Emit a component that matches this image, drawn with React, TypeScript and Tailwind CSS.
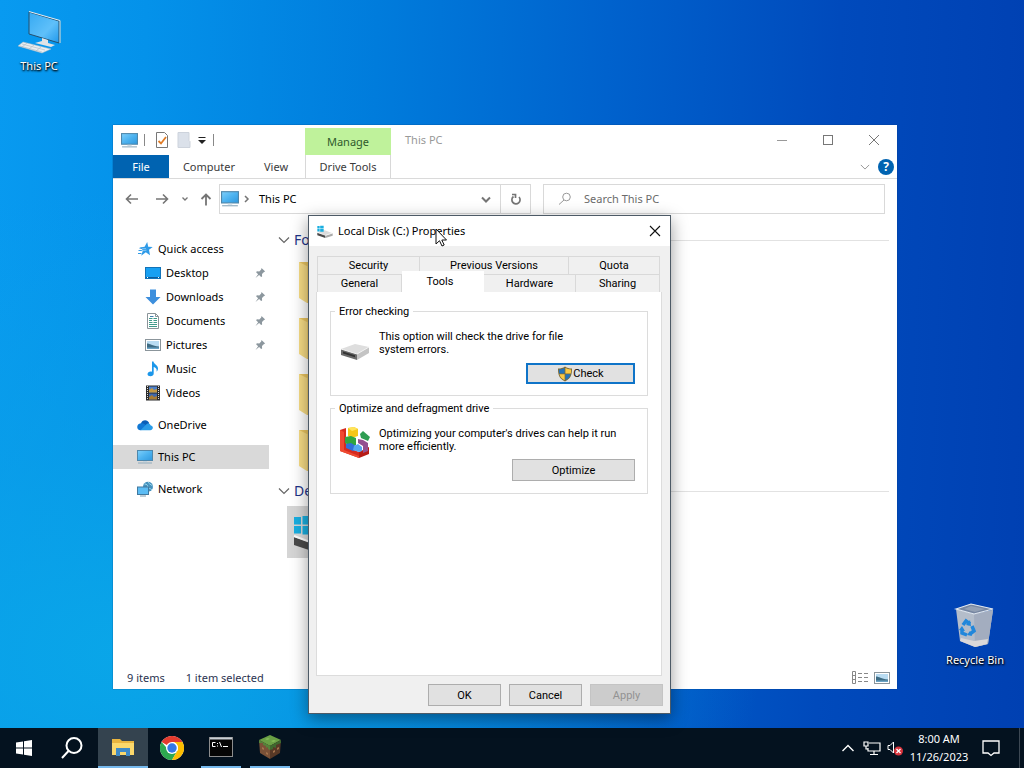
import React, { useState } from 'react';

interface NavItem {
  label: string;
  icon: React.ReactNode;
  child?: boolean;
  pinned?: boolean;
  gap?: boolean;
}

const MonitorIcon = ({ className = 'w-4 h-4' }: { className?: string }) => (
  <svg viewBox="0 0 16 16" className={className} aria-hidden="true">
    <defs>
      <linearGradient id="screen" x1="0" y1="0" x2="1" y2="1">
        <stop offset="0" stopColor="#7fd0fb" />
        <stop offset="0.5" stopColor="#4db3f0" />
        <stop offset="1" stopColor="#2f97dd" />
      </linearGradient>
    </defs>
    <rect x="0.5" y="1.5" width="15" height="10" fill="url(#screen)" stroke="#4f87ab" />
    <rect x="6" y="12" width="4" height="1" fill="#c3d2dc" />
    <rect x="1" y="13.5" width="14" height="1" fill="#8fabbd" />
  </svg>
);

const StarIcon = () => (
  <svg viewBox="0 0 16 16" className="w-4 h-4" aria-hidden="true">
    <path d="M10.200 1l1 4.800 4.500.3-3.700 2.700 1 5.400-4.200-3-4.600 3.600 1.700-5.600L3 6.400l4.600-.6z" fill="#2f9be8" />
    <path d="M1.500 9.500h4M1 12.500h3.500M2.500 7.200h3" stroke="#2f9be8" />
    <path d="M4.500 9.800l5-.6M5 7.800l4-.2" stroke="#bfe3fb" strokeWidth="0.6" />
  </svg>
);

const DesktopIcon = () => (
  <svg viewBox="0 0 16 16" className="w-4 h-4" aria-hidden="true">
    <rect x="0.5" y="2.5" width="15" height="11" fill="#18a0f2" stroke="#1273b8" />
    <path d="M1 12.5h14" stroke="#0d5c9b" />
    <path d="M2 12.5h1M13 12.5h1" stroke="#fff" />
  </svg>
);

const DownloadIcon = () => (
  <svg viewBox="0 0 16 16" className="w-4 h-4" aria-hidden="true">
    <path d="M5 0.5h6V8h4.5L8 15.5.5 8H5z" fill="#3d8fdd" />
  </svg>
);

const DocumentIcon = () => (
  <svg viewBox="0 0 16 16" className="w-4 h-4" aria-hidden="true">
    <path d="M2.5 0.5h8l3 3v12h-11z" fill="#fff" stroke="#8a9499" />
    <path d="M10.5 0.5v3h3" fill="none" stroke="#8a9499" />
    <path d="M4 5.500h3.500M4 7.500h3M4 9.500h3.500M8.500 7.500H12M8.500 5.500H12M8.500 9.500H12M4 11.500h8M4 13.500h8" stroke="#3f9a8a" />
    <path d="M5 3.500h3.500" stroke="#3f7fb0" />
  </svg>
);

const PictureIcon = ({ className = 'w-4 h-4' }: { className?: string }) => (
  <svg viewBox="0 0 16 16" className={className} aria-hidden="true">
    <rect x="0.5" y="2.5" width="15" height="11" fill="#fff" stroke="#8b959b" />
    <rect x="2" y="4" width="12" height="8" fill="#b9dcf2" />
    <path d="M2 6.500c3 0 5 2.500 12 3V11H2z" fill="#3e6c84" />
    <path d="M2 10.500h12V12H2z" fill="#6aa3c4" />
  </svg>
);

const MusicIcon = () => (
  <svg viewBox="0 0 16 16" className="w-4 h-4" aria-hidden="true">
    <path d="M7 0.500h1.500c.3 3 4.500 3.500 4.500 7 0 1.500-.7 2.500-1.500 3.200.8-3-1-4.200-2.800-4.700v6.500c0 1.700-1.500 2.800-3.200 2.800S2.500 14.300 2.500 13s1.500-2.600 3.200-2.600c.5 0 .9.1 1.300.3z" fill="#1c97ea" />
  </svg>
);

const VideoIcon = () => (
  <svg viewBox="0 0 16 16" className="w-4 h-4" aria-hidden="true">
    <rect x="1" y="0.500" width="14" height="15" fill="#2b2b2b" />
    <path d="M2.500 1v14M13.500 1v14" stroke="#ddd" strokeDasharray="1 1" />
    <rect x="4" y="1.500" width="8" height="6" fill="#4c7fc9" />
    <path d="M4 7.500V5l3-2 2 2 3-1v3.500z" fill="#c59a43" />
    <rect x="4" y="8.500" width="8" height="6" fill="#3f68ad" />
    <path d="M4 14.500V12l3-2 2 2 3-1v3.500z" fill="#a87c35" />
  </svg>
);

const CloudIcon = () => (
  <svg viewBox="0 0 16 16" className="w-4 h-4" aria-hidden="true">
    <path d="M3.800 6.500C5 2.500 10.500 1.800 12.300 6.200L8 10z" fill="#0a5fb8" />
    <path d="M3.500 13.200C-1 13-.8 6.800 3.800 6.300c1.700-.2 2.900.3 4 1l5 4z" fill="#1178d4" />
    <path d="M8.500 8.300C10 5.600 13 5.900 13.500 8.300c3.400.8 3 4.900-.3 4.900H3.500z" fill="#2a9ce8" />
  </svg>
);

const NetworkIcon = () => (
  <svg viewBox="0 0 16 16" className="w-4 h-4" aria-hidden="true">
    <circle cx="11" cy="5.800" r="5" fill="#4591bd" />
    <path d="M7.500 3c2.500 0 3 1 3.500 3s2.500 1 4 3M11.500 1c0 2 2 2 4 4" stroke="#9bd6ec" fill="none" />
    <rect x="0.500" y="6" width="11" height="7.500" fill="#5cbcf4" stroke="#41799f" />
    <path d="M3 15h6" stroke="#7f9bad" />
  </svg>
);

const PinIcon = () => (
  <svg viewBox="0 0 12 12" className="w-3 h-3" aria-hidden="true">
    <path d="M7.500 1l3.700 3.600-1.200.3-2 2 .1 2.500-1 .6-2-2L1.500 11l2.600-3.800-2-2 .8-.9 2.400.2 1.900-2z" fill="#8c979e" />
  </svg>
);

const DriveIcon = () => (
  <svg viewBox="0 -2 32 32" className="w-8 h-8" aria-hidden="true">
    <path d="M2 17l14-5 14 3-12 7z" fill="#dedede" />
    <path d="M2 17l16 5v6L2 23z" fill="#6a6a6a" />
    <path d="M18 22l12-7v6l-12 7z" fill="#c4c4c4" />
    <path d="M4 19.500l12 3.700v2L4 21.500z" fill="#333" />
    <path d="M2 17l16 5 12-7" fill="none" stroke="#f2f2f2" />
  </svg>
);

const WindowsDriveIcon = ({ className }: { className: string }) => (
  <svg viewBox="0 0 48 48" className={className} aria-hidden="true">
    <path d="M1 27l22-5 24 9-22 7z" fill="#dcdcdc" />
    <path d="M1 29l24 8v8L1 37z" fill="#4a4a4a" />
    <path d="M25 38l22-7v7l-22 7z" fill="#aaa" />
    <path d="M1 28l24 9 22-7" fill="none" stroke="#fff" strokeWidth="2" />
    <path d="M1 9h7v7.500H1zM9.500 8H20v8.500H9.500zM1 18h7v7.500H1zM9.500 18H20v8.500H9.500z" fill="#19aee0" />
  </svg>
);

const FolderIcon = () => (
  <svg viewBox="0 0 48 48" className="w-12 h-12" aria-hidden="true">
    <path d="M6 2h34v38H12z" fill="#e9c461" />
    <path d="M6 2l8 4v37l-8-5z" fill="#f7dc85" />
    <path d="M14 6h28v37H14z" fill="#f0cd6d" />
  </svg>
);

const DefragIcon = () => (
  <svg viewBox="0 0 32 32" className="w-8 h-8" aria-hidden="true">
    <path d="M1 4l6-2v19l13 5v6L1 25z" fill="#d62a1e" />
    <path d="M1 4l4 2v18l15 6v2L1 25z" fill="#ef4a31" />
    <path d="M20 26l10-5v7l-10 4z" fill="#b81c15" />
    <path d="M9 2l6-1 4 2v7l-6 2-4-2z" fill="#f5c617" />
    <path d="M9 2l6-1 4 2-6 2z" fill="#ffe45b" />
    <path d="M21 8l3-3 7 6-2 4-7-3z" fill="#2f9d52" />
    <path d="M6 11l6-1 5 2v7l-6 1-5-3z" fill="#31a53f" />
    <path d="M19 13l5 1 5 3v8l-5 2v-7l-5-3z" fill="#94508f" />
    <path d="M7 18l5-1 5 3v4l-3 1-7-3z" fill="#3170d8" />
    <path d="M15 20l4-2 4 3v4l-3 1-6-2z" fill="#55a7f0" />
  </svg>
);

const ShieldIcon = () => (
  <svg viewBox="0 0 16 16" className="w-4 h-4" aria-hidden="true">
    <path d="M8 0.500c2 1.500 4 2 7 2 0 6-1 10-7 13-6-3-7-7-7-13 3 0 5-.5 7-2z" fill="#7d6a35" />
    <path d="M7.600 1.800v5.700H2.200c-.2-1.300-.3-2.600-.3-4.100 2.300-.1 4-.5 5.700-1.600z" fill="#2472b8" />
    <path d="M8.400 1.800c1.700 1.100 3.400 1.500 5.700 1.600 0 1.500-.1 2.800-.3 4.100H8.400z" fill="#f9c845" />
    <path d="M2.400 8.200h5.200v6C4.600 12.700 3 10.800 2.400 8.200z" fill="#f9c845" />
    <path d="M13.600 8.200H8.400v6c3-1.500 4.600-3.400 5.200-6z" fill="#2472b8" />
  </svg>
);

const ComputerIcon = () => (
  <svg viewBox="0 0 48 48" className="w-12 h-12" aria-hidden="true">
    <defs>
      <linearGradient id="big-screen" x1="0" y1="0" x2="1" y2="1">
        <stop offset="0" stopColor="#35a9f2" />
        <stop offset="0.6" stopColor="#5fc0fa" />
        <stop offset="1" stopColor="#1f98ec" />
      </linearGradient>
    </defs>
    <path d="M14 4l30 9v22l-30-9z" fill="url(#big-screen)" stroke="#27506e" />
    <path d="M14 3.500l31 9" fill="none" stroke="#e6eef3" />
    <path d="M45 12.500V35" fill="none" stroke="#e8e2d4" />
    <path d="M27 30l6 2v3l7 2-4 2-16-4 7-2z" fill="#dfe3e6" />
    <path d="M8 34l28 7-9 4L3 38z" fill="#e9eef1" stroke="#a9b9c3" strokeWidth="0.5" />
    <path d="M7 36l23 6M5 38l22 6M12 35l-5 4M19 37l-5 4M26 39l-5 4" stroke="#b3bfc7" strokeWidth="0.7" />
  </svg>
);

const RecycleBinIcon = () => (
  <svg viewBox="0 0 48 48" className="w-12 h-12" aria-hidden="true">
    <path d="M5 7l18 5 19-4-5 34-13 3-15-6z" fill="#b4bdca" />
    <path d="M23 12l19-4-5 34-13 3z" fill="#a3adbf" />
    <path d="M5 7l15-5 22 5-19 5z" fill="#7686a1" stroke="#e4eaf0" strokeWidth="1.200" />
    <path d="M13 7l7-3 14 3-10 3z" fill="#93a0b4" />
    <path d="M10 36l13 3 14-2-1 5-12 3-15-6z" fill="#dad8d9" />
    <g fill="none" stroke="#2187db" strokeWidth="3.500">
      <path d="M12 23l3-4 4 3" />
      <path d="M21 24l2 5-4 3" />
      <path d="M16 33l-5-2v-4" />
    </g>
    <path d="M19 18l1 6-5-1zM21 34l-5-1 3-4zM8 28l3-4 3 5z" fill="#2187db" />
  </svg>
);

const ChevronIcon = ({ className }: { className: string }) => (
  <svg viewBox="0 0 12 12" className={className} fill="none" stroke="currentColor" aria-hidden="true">
    <path d="M1 3.500l5 5 5-5" strokeWidth="1.200" />
  </svg>
);

const navItems: NavItem[] = [
  { label: 'Quick access', icon: <StarIcon /> },
  { label: 'Desktop', icon: <DesktopIcon />, child: true, pinned: true },
  { label: 'Downloads', icon: <DownloadIcon />, child: true, pinned: true },
  { label: 'Documents', icon: <DocumentIcon />, child: true, pinned: true },
  { label: 'Pictures', icon: <PictureIcon />, child: true, pinned: true },
  { label: 'Music', icon: <MusicIcon />, child: true },
  { label: 'Videos', icon: <VideoIcon />, child: true },
  { label: 'OneDrive', icon: <CloudIcon />, gap: true },
  { label: 'This PC', icon: <MonitorIcon />, gap: true },
  { label: 'Network', icon: <NetworkIcon />, gap: true }
];

const GroupHeader = ({ label }: { label: string }) => (
  <div className="flex items-center h-6 gap-1 pr-2">
    <ChevronIcon className="w-3 h-3 shrink-0 text-[#666]" />
    <h2 className="text-[14px] leading-6 text-[#1e3287] whitespace-nowrap">{label}</h2>
    <div className="flex-1 h-px bg-[#e2e2e2]"></div>
  </div>
);

const ExplorerTitleBar = () => (
  <div className="flex h-[30px] text-[#999]">
    <div className="flex items-center w-48 pl-2">
      <MonitorIcon className="w-[17px] h-[17px]" />
      <div className="w-px h-3 ml-1.5 mr-2.5 bg-[#888]"></div>
      <button type="button" aria-label="Properties">
        <svg viewBox="0 0 14 16" className="w-3.5 h-4">
          <path d="M1.5 0.5h8l3 3v12h-11z" fill="#fff" stroke="#777" />
          <path d="M3.500 9l2.500 2.500L11 5" fill="none" stroke="#e07b25" strokeWidth="1.800" />
        </svg>
      </button>
      <button type="button" aria-label="New folder" className="ml-2">
        <svg viewBox="0 0 14 16" className="w-3.5 h-4">
          <path d="M1 0.500h11v8l1 1v6H1z" fill="#dbe1ea" stroke="#cdd3dc" />
        </svg>
      </button>
      <button type="button" aria-label="Customize toolbar" className="ml-1.5">
        <svg viewBox="0 0 10 10" className="w-2.5 h-2.5">
          <path d="M1.500 2.500h7" stroke="#222" />
          <path d="M1 5h8L5 9z" fill="#222" />
        </svg>
      </button>
      <div className="w-px h-3 ml-1.5 bg-[#888]"></div>
    </div>
    <div className="flex items-center justify-center w-[86px] mt-[3px] bg-[#bff29b] text-[#2f5a2c] text-[11px] leading-4">Manage</div>
    <h1 className="pl-3.5 text-[11px] leading-[30px]">This PC</h1>
    <div className="flex ml-auto">
      <button type="button" aria-label="Minimize" className="flex items-center justify-center w-[46px]">
        <svg viewBox="0 0 12 12" className="w-3 h-3"><path d="M1 6.500h10" stroke="currentColor" /></svg>
      </button>
      <button type="button" aria-label="Maximize" className="flex items-center justify-center w-[46px]">
        <svg viewBox="0 0 12 12" className="w-3 h-3"><rect x="1.500" y="1.500" width="9" height="9" fill="none" stroke="#777" /></svg>
      </button>
      <button type="button" aria-label="Close" className="flex items-center justify-center w-[46px]">
        <svg viewBox="0 0 12 12" className="w-3 h-3"><path d="M1 1l10 10M11 1L1 11" stroke="#777" /></svg>
      </button>
    </div>
  </div>
);

const ExplorerRibbon = () => (
  <div className="flex h-6 border-b border-[#dadada] text-[11px] leading-[23px] text-[#3a3a3a]">
    <button type="button" className="w-14 bg-[#0063b1] text-white">File</button>
    <button type="button" className="w-20">Computer</button>
    <button type="button" className="w-[54px]">View</button>
    <button type="button" className="w-[86px] ml-0.5 border-x border-[#d8d8d8] whitespace-nowrap">Drive Tools</button>
    <div className="flex items-center gap-2 ml-auto pr-[3px]">
      <button type="button" aria-label="Expand the ribbon" className="text-[#999]">
        <ChevronIcon className="w-2.5 h-2.5" />
      </button>
      <button type="button" aria-label="Help" className="flex items-center justify-center w-4 h-4 rounded-full bg-[#0063b1] text-white text-[12px] font-bold leading-4">?</button>
    </div>
  </div>
);

const ExplorerAddressBar = () => (
  <div className="flex items-center pt-[5px] pl-3 pr-3 text-[#757575]">
    <div className="flex items-center w-[94px]">
      <button type="button" aria-label="Back">
        <svg viewBox="0 0 14 14" className="w-3.5 h-3.5" fill="none" stroke="currentColor" strokeWidth="1.600"><path d="M13 7H2M6 2.500L1.500 7 6 11.500" /></svg>
      </button>
      <button type="button" aria-label="Forward" className="ml-4">
        <svg viewBox="0 0 14 14" className="w-3.5 h-3.5" fill="none" stroke="currentColor" strokeWidth="1.600"><path d="M1 7h11M8 2.500L12.500 7 8 11.500" /></svg>
      </button>
      <button type="button" aria-label="Recent locations" className="ml-3">
        <svg viewBox="0 0 8 8" className="w-2 h-2" fill="none" stroke="currentColor" strokeWidth="1.300"><path d="M1.500 2.500L4 5l2.500-2.500" /></svg>
      </button>
      <button type="button" aria-label="Up" className="ml-2.5">
        <svg viewBox="0 0 14 14" className="w-3.5 h-3.5" fill="none" stroke="currentColor" strokeWidth="1.800"><path d="M7 13.500V2.500M2.500 7L7 2.500 11.500 7" /></svg>
      </button>
    </div>
    <div className="flex items-center flex-1 h-[30px] border border-[#d9d9d9]">
      <MonitorIcon className="w-[18px] h-[18px] ml-px" />
      <svg viewBox="0 0 8 8" className="w-2 h-2 ml-1 mr-2" fill="none" stroke="currentColor" strokeWidth="1.500"><path d="M2 1l3 3-3 3" /></svg>
      <span className="text-[11px] leading-4 text-black">This PC</span>
      <button type="button" aria-label="Previous locations" className="ml-auto mr-2">
        <svg viewBox="0 0 12 12" className="w-3 h-3" fill="none" stroke="currentColor" strokeWidth="2"><path d="M2 4.500l4 4 4-4" /></svg>
      </button>
      <button type="button" aria-label="Refresh" className="flex items-center justify-center w-[30px] h-full border-l border-[#d9d9d9]">
        <svg viewBox="0 0 12 12" className="w-3 h-3" fill="none" stroke="currentColor" strokeWidth="1.700"><path d="M3.500 3.500a4.100 4.100 0 105.500.5" /><path d="M2 1.500h3.500V5" /></svg>
      </button>
    </div>
    <div className="flex items-center w-[342px] h-[30px] ml-3 pl-3.5 border border-[#d9d9d9]">
      <svg viewBox="0 0 14 14" className="w-3.5 h-3.5" fill="none" stroke="#999"><circle cx="8.500" cy="5" r="3.800" /><path d="M6 8l-5 4.500" /></svg>
      <input type="search" aria-label="Search This PC" placeholder="Search This PC" className="flex-1 min-w-0 ml-3 text-[11px] leading-4 outline-none placeholder:text-[#6b6b6b]" />
    </div>
  </div>
);

const ExplorerWindow = () => (
  <section aria-label="This PC" className="absolute left-[113px] top-[125px] flex flex-col w-[784px] h-[564px] bg-white shadow-[0_0_1px_#003a70]">
    <ExplorerTitleBar />
    <ExplorerRibbon />
    <ExplorerAddressBar />
    <div className="flex flex-1 min-h-0 pt-3.5">
      <nav className="w-[156px] pt-[9px] text-[11px] leading-6 text-black">
        {navItems.map((item) => (
          <a
            key={item.label}
            href="#"
            className={`flex items-center h-6 pr-[3px] ${item.child ? 'pl-8' : 'pl-6'} ${item.gap ? 'mt-2' : ''} ${item.label === 'This PC' ? 'bg-[#d9d9d9]' : ''}`}
          >
            {item.icon}
            <span className="ml-[5px] whitespace-nowrap">{item.label}</span>
            {item.pinned && <span className="ml-auto"><PinIcon /></span>}
          </a>
        ))}
      </nav>
      <div className="flex-1 min-w-0 pl-[9px]">
        <GroupHeader label="Folders (7)" />
        <div className="flex flex-col gap-2 pt-2 pl-[15px] pb-[3px] w-64">
          {[1, 2, 3, 4].map((row) => (
            <div key={row} className="h-12"><FolderIcon /></div>
          ))}
        </div>
        <GroupHeader label="Devices and drives (2)" />
        <div className="flex items-center w-64 h-[52px] mt-[3px] ml-[9px] pl-1.5 bg-[#d5d5d5]">
          <WindowsDriveIcon className="w-12 h-12" />
        </div>
      </div>
    </div>
    <footer className="flex items-center h-6 pl-3.5 pr-[7px] pt-px text-[11px] leading-4 text-[#2b3350]">
      <span>9 items</span>
      <span className="ml-[21px]">1 item selected</span>
      <button type="button" aria-label="Details view" className="ml-auto">
        <svg viewBox="0 0 16 14" className="w-4 h-3.5" fill="none" stroke="#888">
          <path d="M0.5 0.5h3v12h-3zM.5 4.500h3M.5 8.500h3" />
          <path d="M6 2.500h4M12 2.500h4M6 6.500h4M12 6.500h4M6 10.500h4M12 10.500h4" />
        </svg>
      </button>
      <button type="button" aria-label="Large icons view" className="ml-1.5">
        <PictureIcon />
      </button>
    </footer>
  </section>
);

const dialogButton = 'h-[22px] border border-[#adadad] bg-[#e1e1e1]';

const PropertiesDialog = () => {
  const [tab, setTab] = useState('Tools');

  const renderTab = (label: string, width: string) => (
    <button
      key={label}
      type="button"
      role="tab"
      aria-selected={tab === label}
      onClick={() => setTab(label)}
      className={`${width} ${tab === label ? 'h-[21px] -mt-[3px] pr-1.5 bg-white' : 'h-[18px] bg-[#f0f0f0] border-t border-r border-[#d9d9d9]'} whitespace-nowrap`}
    >
      {label}
    </button>
  );

  return (
    <section
      role="dialog"
      aria-label="Local Disk (C:) Properties"
      className="absolute left-[308px] top-[215px] flex flex-col w-[363px] h-[499px] border border-[#4d5a66] bg-[#f0f0f0] text-[11px] leading-[13px] text-black shadow-[0_5px_16px_rgba(0,0,0,0.4)] font-[Roboto,'Liberation_Sans',sans-serif]"
    >
      <header className="flex items-center h-[30px] pl-2 pr-2 bg-white font-['Noto_Sans','Open_Sans',sans-serif]">
        <WindowsDriveIcon className="w-4 h-4" />
        <h2 className="ml-[5px] text-[11px] leading-4">Local Disk (C:) Properties</h2>
        <button type="button" aria-label="Close" className="ml-auto">
          <svg viewBox="0 0 14 14" className="w-3.5 h-3.5" fill="none" stroke="#111" strokeWidth="1.100"><path d="M2 2l10 10M12 2L2 12" /></svg>
        </button>
      </header>
      <div className="flex flex-col flex-1 pl-[7px] pr-2 pt-2.5">
        <div role="tablist" className="ml-px mr-0.5 border-l border-[#d9d9d9]">
          <div className="flex">
            {renderTab('Security', 'w-[102px]')}
            {renderTab('Previous Versions', 'w-[149px]')}
            {renderTab('Quota', 'flex-1')}
          </div>
          <div className="flex">
            {renderTab('General', 'w-[84px]')}
            {renderTab('Tools', 'w-[82px]')}
            {renderTab('Hardware', 'w-[92px]')}
            {renderTab('Sharing', 'flex-1')}
          </div>
        </div>
        <div role="tabpanel" className="flex-1 px-[13px] pt-[13px] border border-[#dcdcdc] border-t-0 bg-white">
          <fieldset className="h-[91px] px-2 border border-[#dcdcdc]">
            <legend className="-ml-1 px-1">Error checking</legend>
            <div className="flex items-center gap-2 pt-3">
              <DriveIcon />
              <p className="w-48 mb-1.5">This option will check the drive for file system errors.</p>
            </div>
            <div className="flex justify-end pt-px pr-1">
              <button type="button" className="flex items-center justify-center w-[109px] h-[21px] border-2 border-[#0f74c8] bg-[#e1e1e1]">
                <ShieldIcon />
                Check
              </button>
            </div>
          </fieldset>
          <fieldset className="h-[92px] mt-1.5 px-2 border border-[#dcdcdc]">
            <legend className="-ml-1 px-1">Optimize and defragment drive</legend>
            <div className="flex items-center gap-2 pt-[11px]">
              <DefragIcon />
              <p className="flex-1 mb-1">Optimizing your computer's drives can help it run more efficiently.</p>
            </div>
            <div className="flex justify-end pt-px pr-1">
              <button type="button" className={`w-[123px] ${dialogButton}`}>Optimize</button>
            </div>
          </fieldset>
        </div>
      </div>
      <footer className="flex justify-end gap-2 pt-2 pb-[7px] pr-[7px]">
        <button type="button" className={`w-[73px] ${dialogButton}`}>OK</button>
        <button type="button" className={`w-[73px] ${dialogButton}`}>Cancel</button>
        <button type="button" disabled className="w-[73px] h-[22px] border border-[#c4c4c4] bg-[#cccccc] text-[#929292]">Apply</button>
      </footer>
    </section>
  );
};

const Taskbar = () => (
  <footer className="flex items-stretch h-10 shrink-0 bg-[#04121f] text-white">
    <button type="button" aria-label="Start" className="flex items-center justify-center w-12">
      <svg viewBox="0 0 16 16" className="w-4 h-4" fill="#fff">
        <path d="M0 2.500l7-1v6H0zM8 1.300L16 0v7.500H8zM0 8.500h7v6l-7-1zM8 8.500h8V16l-8-1.300z" />
      </svg>
    </button>
    <button type="button" aria-label="Search" className="flex items-center justify-center w-12">
      <svg viewBox="0 0 24 24" className="w-6 h-6" fill="none" stroke="#fff" strokeWidth="2">
        <circle cx="14" cy="9.500" r="7.500" />
        <path d="M8.500 15L2 22" />
      </svg>
    </button>
    <button type="button" aria-label="File Explorer" className="flex items-center justify-center w-[50px] ml-[2px] bg-[#34434f] border-b-2 border-[#76b9ed]">
      <svg viewBox="0 0 24 20" className="w-6 h-5">
        <path d="M1 2h8l2 2h12v14H1z" fill="#e9b53f" />
        <path d="M1 6h22v12H1z" fill="#fbd86b" />
        <path d="M5 19v-8h14v8h-4v-4H9v4z" fill="#3f8ac6" />
      </svg>
    </button>
    <button type="button" aria-label="Chrome" className="flex items-center justify-center w-12">
      <svg viewBox="0 0 24 24" className="w-6 h-6">
        <circle cx="12" cy="12" r="12" fill="#fff" />
        <path d="M12 12L1.600 6A12 12 0 0122.400 6H12z" fill="#e33b2e" />
        <path d="M1.600 6A12 12 0 0012 24l5.200-9L12 12H6.800z" fill="#2da94f" />
        <path d="M22.400 6A12 12 0 0112 24l5.200-9A6 6 0 0012 6z" fill="#fdbd00" />
        <circle cx="12" cy="12" r="6" fill="#fff" />
        <circle cx="12" cy="12" r="4.700" fill="#3478e5" />
      </svg>
    </button>
    <button type="button" aria-label="Command Prompt" className="flex items-center justify-center w-10 ml-[5px] border-b-2 border-[#76b9ed]">
      <svg viewBox="0 0 24 20" className="w-6 h-5">
        <rect x="0.500" y="0.500" width="23" height="19" fill="#050505" stroke="#8d8d8d" />
        <path d="M1 1.500h22" stroke="#c9d0d6" strokeWidth="2" />
        <path d="M6.500 5.500h-3v4h3M8.500 6v1M8.500 8.500v1M10.500 5l2 5M14 9.500h5" stroke="#fff" fill="none" />
      </svg>
    </button>
    <button type="button" aria-label="Minecraft" className="flex items-center justify-center w-10 ml-[9px] border-b-2 border-[#76b9ed]">
      <svg viewBox="0 0 24 24" className="w-6 h-6">
        <path d="M12 0l11 5-11 6L1 5z" fill="#6aa045" />
        <path d="M1 5l11 6v13L2 18z" fill="#7b5137" />
        <path d="M23 5l-11 6v13l10-6z" fill="#573826" />
        <path d="M1 5l11 6v4l-2-1v-2l-2 1v-2l-3-1v-2L1 8z" fill="#54833a" />
        <path d="M23 5l-11 6v4l3-1v-2l3 1v-3l5-2z" fill="#3f692f" />
        <path d="M4 12l2 1v2l-2-1zM8 17l2 1v2l-2-1zM15 16l2-1v2l-2 1zM19 13l2-1v2l-2 1z" fill="#a4724c" />
        <path d="M7 4l3-1 2 1-3 1zM13 6l3-1 2 1-3 1z" fill="#86bd58" />
      </svg>
    </button>
    <div className="flex items-center ml-auto">
      <button type="button" aria-label="Show hidden icons">
        <svg viewBox="0 0 14 14" className="w-3.5 h-3.5" fill="none" stroke="#fff" strokeWidth="1.400"><path d="M1.500 10L7 4.500l5.500 5.500" /></svg>
      </button>
      <button type="button" aria-label="Network" className="ml-2">
        <svg viewBox="0 0 18 16" className="w-[18px] h-4" fill="none" stroke="#fff" strokeWidth="1.200">
          <path d="M6 3h11v8H5V8M11 11v3M7 14.500h8M1 2h4v4H1zM3 6v3h2" />
        </svg>
      </button>
      <button type="button" aria-label="Volume muted" className="ml-1.5">
        <svg viewBox="0 0 18 16" className="w-[18px] h-4">
          <path d="M1 5.500h2L6.500 2v11L3 9.500H1z" fill="none" stroke="#fff" />
          <circle cx="11.500" cy="11" r="4.500" fill="#d8333c" />
          <path d="M9.500 9l4 4M13.500 9l-4 4" stroke="#fff" strokeWidth="1.300" />
        </svg>
      </button>
      <div className="w-[62px] ml-[3px] text-[11px] leading-[18px] text-center">
        <div>8:00 AM</div>
        <div>11/26/2023</div>
      </div>
      <button type="button" aria-label="Notifications" className="ml-3">
        <svg viewBox="0 0 18 18" className="w-[18px] h-[18px]" fill="none" stroke="#fff" strokeWidth="1.300"><path d="M1 2h16v12h-5l-3 2.500L6 14H1z" /></svg>
      </button>
      <div className="w-px h-10 ml-[19px] mr-1 bg-[#3d4853]"></div>
    </div>
  </footer>
);

const App: React.FC = () => {
  return (
    <div className="flex flex-col h-screen overflow-hidden bg-[radial-gradient(ellipse_at_12%_85%,rgba(10,168,232,0.9)_0%,rgba(10,160,230,0.6)_22%,rgba(0,120,210,0)_50%),linear-gradient(92deg,#089af0_0%,#0492ea_14%,#007cdc_36%,#0062cd_58%,#004abc_80%,#0040b2_100%)] font-['Noto_Sans','Open_Sans',sans-serif]">
      <main className="relative flex-1 min-h-0">
        <button type="button" className="absolute left-1 top-2 flex flex-col items-center w-[70px] text-[11px] leading-4 text-white [text-shadow:1px_1px_2px_#000,0_1px_2px_#000]">
          <ComputerIcon />
          <span className="mt-0.5">This PC</span>
        </button>
        <button type="button" className="absolute right-3 bottom-[60px] flex flex-col items-center w-[74px] text-[11px] leading-4 text-white whitespace-nowrap [text-shadow:1px_1px_2px_#000,0_1px_2px_#000]">
          <RecycleBinIcon />
          <span className="mt-0.5">Recycle Bin</span>
        </button>
        <ExplorerWindow />
        <PropertiesDialog />
        <svg viewBox="0 0 12 19" className="absolute left-[435px] top-[228px] w-3 h-[19px]" aria-hidden="true">
          <path d="M1 1v15l3.500-3.300L7 18l2.200-1-2.400-5h4.700z" fill="#fff" stroke="#111" strokeWidth="1" />
        </svg>
      </main>
      <Taskbar />
    </div>
  );
};

export default App;
